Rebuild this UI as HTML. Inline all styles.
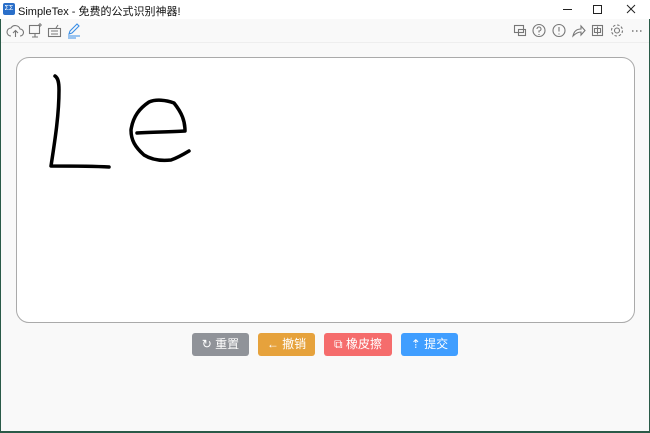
<!DOCTYPE html>
<html><head><meta charset="utf-8"><style>
*{margin:0;padding:0;box-sizing:border-box}
body{width:650px;height:433px;overflow:hidden;background:#f9f9f9;font-family:"Liberation Sans","Noto Sans CJK SC",sans-serif;position:relative}
.title{position:absolute;left:0;top:0;width:650px;height:19px;background:#fff;font-size:11px;color:#111}
.tb{position:absolute;left:0;top:19px;width:650px;height:24px;background:#f9f9f9;border-bottom:1px solid #eee}
.canvas{position:absolute;left:16px;top:57px;width:619px;height:266px;background:#fff;border:1px solid #aaa;border-radius:13px}
.btn{position:absolute;top:333px;height:23px;border-radius:3px;color:#fff;font-size:12px;line-height:23px;text-align:center}
.edge{position:absolute;background:#2a5a48}
</style></head><body>
<div class="title">
<div style="position:absolute;left:3px;top:3px;width:12px;height:12px;background:#2a6fc9;border-radius:2px;color:#fff;font-size:7px;line-height:12px;text-align:center">ΣΣ</div>
<div style="position:absolute;left:18px;top:3px">SimpleTex - 免费的公式识别神器!</div>
<svg style="position:absolute;left:560px;top:0" width="90" height="19" stroke="#222" fill="none" stroke-width="1"><path d="M3 9.5h9"/><rect x="33.5" y="5.5" width="8" height="8"/><path d="M67 5l8 8M75 5l-8 8"/></svg>
</div>
<div class="tb">
<svg width="650" height="24" fill="none" stroke="#777" stroke-width="1.1">
<path d="M11 17a4 4 0 0 1 0-8a5 5 0 0 1 9 1a3 3 0 0 1 0 7M15.5 18v-6M13 14l2.5-2.5L18 14"/>
<rect x="29.5" y="6.5" width="10" height="8"/><path d="M32 18h6M35 15v3M38 6h4M40 4v4"/>
<rect x="48.5" y="9.5" width="12" height="8"/><path d="M51 12h7M51 15h7M56 9l2-3"/>
<path stroke="#3a8ee6" d="M70 12l7-7 2 2-7 7-3 1zM68 17h12M68 19h8"/>
<rect x="514.5" y="6.5" width="9" height="7"/><rect x="518.5" y="10.5" width="7" height="6"/>
<circle cx="539" cy="11.5" r="6"/><path d="M537 10a2 2 0 1 1 2 2v1.5M539 15v1"/>
<circle cx="559" cy="11.5" r="6"/><path d="M559 8v4.5M559 14.5v1"/>
<path d="M573 17c1-5 4-7 8-7v-3l4 4.5-4 4.5v-3c-3 0-5 1-8 4z"/>
<rect x="592.5" y="6.5" width="10" height="10"/><path d="M594.5 9.5h6v4h-6zM597.5 7.5v8"/>
<circle cx="617" cy="11.5" r="2.5"/><circle cx="617" cy="11.5" r="5.5" stroke-dasharray="2.5 1.8"/>
<path stroke-width="1.5" d="M632 12h1.5M636 12h1.5M640 12h1.5"/>
</svg>
</div>
<div class="canvas"></div>
<svg style="position:absolute;left:0;top:0" width="650" height="433" fill="none" stroke="#000" stroke-width="3.5" stroke-linecap="round" stroke-linejoin="round">
<path d="M55 76c3 2 4 6 4 14c0 25-4 50-8 76c20 0 40 0 58 1"/>
<path d="M137 133c16-1 32-1 48-2c0-10-3-18-11-28c-8-3-18-4-25-1c-9 6-16 14-18 28c0 10 4 17 13 25c8 5 18 6 27 5c6-2 13-6 18-9"/>
</svg>
<div class="btn" style="left:192px;width:57px;background:#909399">↻ 重置</div>
<div class="btn" style="left:258px;width:57px;background:#e6a23c">← 撤销</div>
<div class="btn" style="left:324px;width:68px;background:#f56c6c">⧉ 橡皮擦</div>
<div class="btn" style="left:401px;width:57px;background:#409eff">⇡ 提交</div>
<div class="edge" style="left:0;top:19px;width:1px;height:414px"></div>
<div class="edge" style="right:0;top:19px;width:1px;height:414px"></div>
<div class="edge" style="left:0;bottom:0;width:650px;height:2px"></div>
</body></html>
